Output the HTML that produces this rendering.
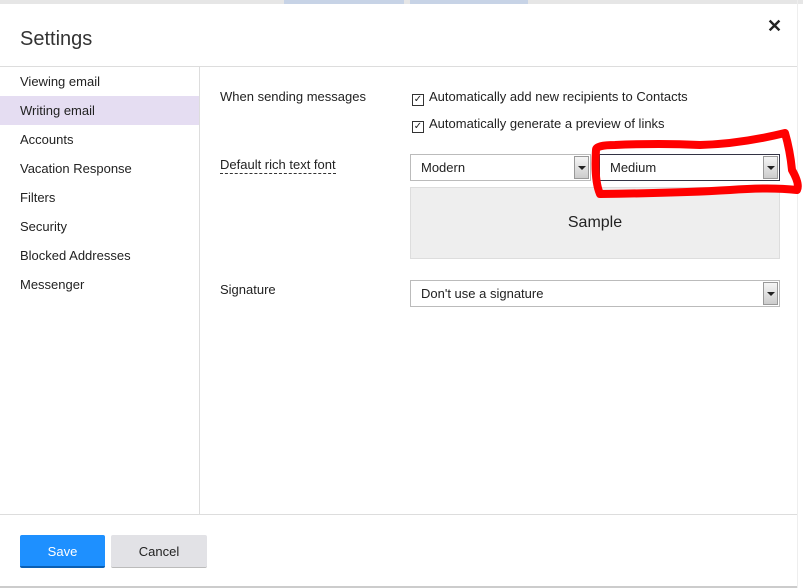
<!DOCTYPE html>
<html><head><meta charset="utf-8"><style>
*{margin:0;padding:0;box-sizing:border-box}
body{width:803px;height:588px;background:#fff;font-family:"Liberation Sans",sans-serif;color:#222;position:relative;overflow:hidden;font-size:13px}
.top{position:absolute;left:0;top:0;width:803px;height:4px;background:#e6e6e6}
.tb{position:absolute;top:0;height:4px;background:#c7d3e6}
.title{position:absolute;left:20px;top:28px;font-size:20px;color:#333}
.x{position:absolute;left:767px;top:16px;font-size:18px;font-weight:bold}
.hl{position:absolute;left:0;top:66px;width:797px;height:1px;background:#ddd}
.vl{position:absolute;left:199px;top:66px;width:1px;height:448px;background:#ddd}
.fl{position:absolute;left:0;top:514px;width:797px;height:1px;background:#ddd}
.bl{position:absolute;left:0;top:586px;width:797px;height:2px;background:#ccc}
.rl{position:absolute;left:797px;top:0;width:1px;height:588px;background:#eee}
.nav div{position:absolute;left:0;width:199px;height:29px;padding-left:20px;line-height:29px}
.lbl{position:absolute;left:220px}
.cb{position:absolute;left:412px;font-size:13px}
.cb span{display:inline-block;width:12px;height:12px;border:1px solid #333;margin-right:5px;vertical-align:-1px;font-size:10px;line-height:10px;text-align:center}
.sel{position:absolute;height:27px;border:1px solid #bbb;padding-left:10px;line-height:25px;background:#fff}
.arr{position:absolute;right:1px;top:1px;width:15px;height:23px;background:linear-gradient(#f5f5f5,#ccc);border:1px solid #999}
.arr:after{content:"";position:absolute;left:3px;top:9px;border:4px solid transparent;border-top:4px solid #222}
.btn{position:absolute;top:535px;height:33px;line-height:33px;text-align:center;border-radius:2px}
</style></head><body>
<div class="top"></div><div class="tb" style="left:284px;width:120px"></div><div class="tb" style="left:410px;width:118px"></div>
<div class="title">Settings</div>
<div class="x">✕</div>
<div class="hl"></div><div class="vl"></div><div class="fl"></div><div class="bl"></div><div class="rl"></div>
<div class="nav">
<div style="top:67px">Viewing email</div>
<div style="top:96px;background:#e5ddf2">Writing email</div>
<div style="top:125px">Accounts</div>
<div style="top:154px">Vacation Response</div>
<div style="top:183px">Filters</div>
<div style="top:212px">Security</div>
<div style="top:241px">Blocked Addresses</div>
<div style="top:270px">Messenger</div>
</div>
<div class="lbl" style="top:89px">When sending messages</div>
<div class="lbl" style="top:157px;border-bottom:1px dashed #333;padding-bottom:1px">Default rich text font</div>
<div class="lbl" style="top:282px">Signature</div>
<div class="cb" style="top:89px"><span>✓</span>Automatically add new recipients to Contacts</div>
<div class="cb" style="top:116px"><span>✓</span>Automatically generate a preview of links</div>
<div class="sel" style="left:410px;top:154px;width:181px">Modern<div class="arr"></div></div>
<div class="sel" style="left:599px;top:154px;width:181px;border-color:#334">Medium<div class="arr"></div></div>
<div style="position:absolute;left:410px;top:187px;width:370px;height:72px;background:#eee;border:1px solid #ddd;text-align:center;line-height:70px;font-size:16px">Sample</div>
<div class="sel" style="left:410px;top:280px;width:370px">Don't use a signature<div class="arr"></div></div>
<svg style="position:absolute;left:0;top:0" width="803" height="588"><path d="M596 150 Q596 145 615 145 Q660 143 700 145 Q740 144 785 133 Q790 150 792 170 Q800 184 797 190 Q770 187 730 190 Q680 193 600 194 Q594 180 596 150Z" fill="none" stroke="#f00" stroke-width="8" stroke-linejoin="round"/></svg>
<div class="btn" style="left:20px;width:85px;background:#1e90ff;color:#fff;border-bottom:2px solid #0a5fb4">Save</div>
<div class="btn" style="left:111px;width:96px;background:#e2e2e6;border-bottom:1px solid #bbb">Cancel</div>
</body></html>
